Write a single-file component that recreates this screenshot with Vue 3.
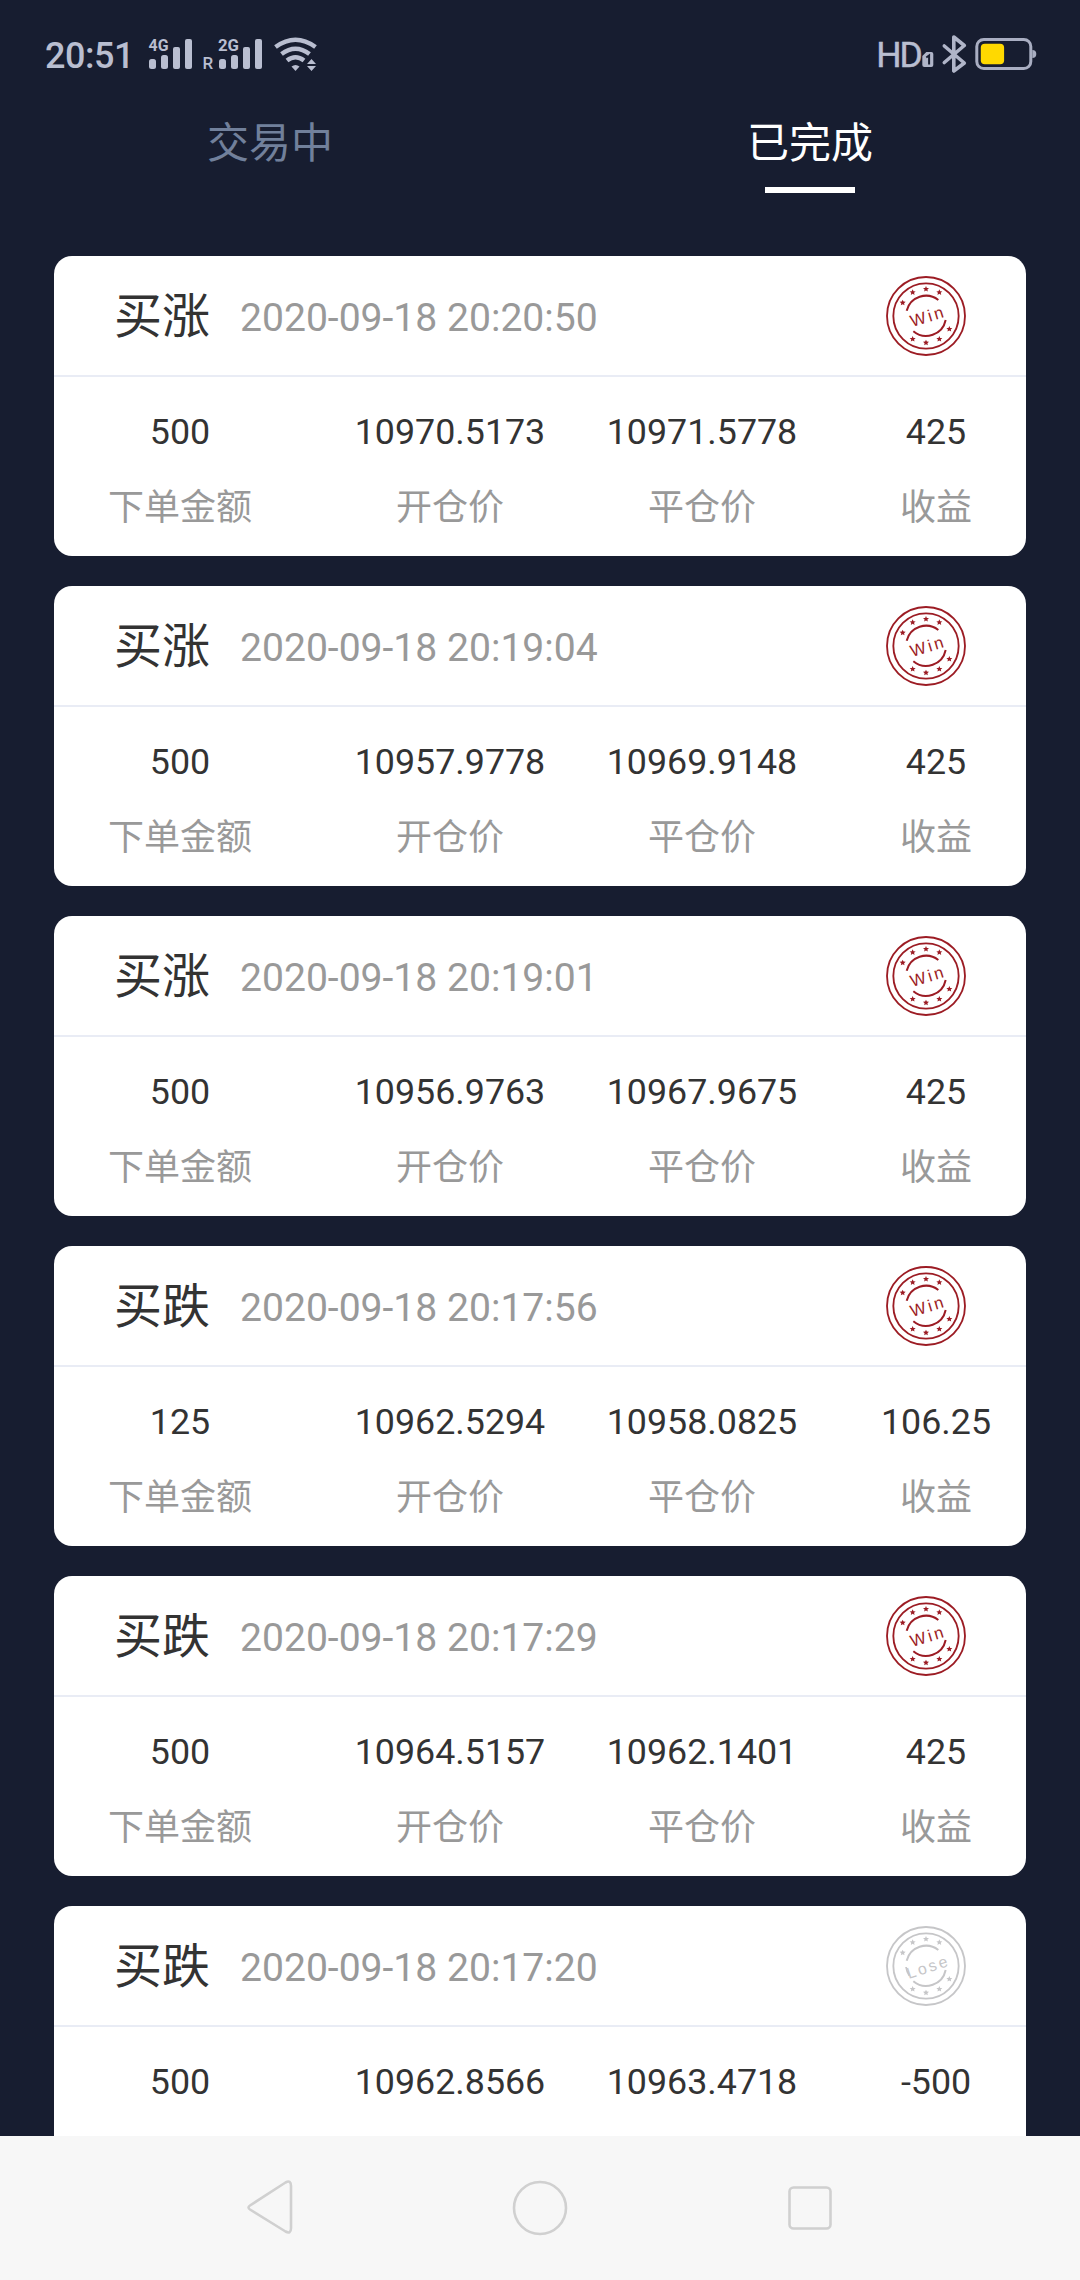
<script setup>
const orders = [
  { side: '买涨', time: '2020-09-18 20:20:50', amount: '500', open: '10970.5173', close: '10971.5778', profit: '425', win: true },
  { side: '买涨', time: '2020-09-18 20:19:04', amount: '500', open: '10957.9778', close: '10969.9148', profit: '425', win: true },
  { side: '买涨', time: '2020-09-18 20:19:01', amount: '500', open: '10956.9763', close: '10967.9675', profit: '425', win: true },
  { side: '买跌', time: '2020-09-18 20:17:56', amount: '125', open: '10962.5294', close: '10958.0825', profit: '106.25', win: true },
  { side: '买跌', time: '2020-09-18 20:17:29', amount: '500', open: '10964.5157', close: '10962.1401', profit: '425', win: true },
  { side: '买跌', time: '2020-09-18 20:17:20', amount: '500', open: '10962.8566', close: '10963.4718', profit: '-500', win: false },
]

const columns = [
  { key: 'amount', label: '下单金额' },
  { key: 'open', label: '开仓价' },
  { key: 'close', label: '平仓价' },
  { key: 'profit', label: '收益' },
]

// The last card runs under the navigation bar, above its label row.
const fullCards = orders.length - 1

const stars = [
  [-70, -40], [-40, -71], [0, -81], [40, -71],
  [-40, 69], [0, 80], [40, 69], [70, 39],
]
</script>

<template>
  <div class="screen">
    <header class="status">
      <span class="clock">20:51</span>
      <svg class="signals" width="186" height="44" viewBox="0 -6 186 44">
        <g fill="#b9bed0">
          <rect x="7" y="21" width="7" height="10" rx="2.5" />
          <rect x="19" y="17" width="7" height="14" rx="2.5" />
          <rect x="31" y="9" width="7" height="22" rx="2" />
          <rect x="43" y="1" width="7" height="30" rx="2" />
          <rect x="77" y="21" width="7" height="10" rx="2.5" />
          <rect x="89" y="17" width="7" height="14" rx="2.5" />
          <rect x="101" y="9" width="7" height="22" rx="2" />
          <rect x="113" y="1" width="7" height="30" rx="2" />
          <text x="6.500" y="13" class="net" textLength="20" lengthAdjust="spacingAndGlyphs">4G</text>
          <text x="76" y="13" class="net" textLength="21" lengthAdjust="spacingAndGlyphs">2G</text>
          <text x="60.500" y="31" class="roam">R</text>
          <path d="M149.500 28.500 Q153.500 25.500 157.500 28.500 L153.500 33 Z" />
          <path d="M165 26 l4.500 -5 l4.500 5z M165 28 l4.500 5 l4.500 -5z" />
        </g>
        <g fill="none" stroke="#b9bed0" stroke-width="4.500">
          <path d="M133.500 9 Q153.500 -5.500 173.500 9" />
          <path d="M139.500 16 Q153.500 5.500 167.500 16" />
          <path d="M145 22.500 Q153.500 16 162 22.500" />
        </g>
      </svg>
      <span class="hd">HD</span>
      <svg width="118" height="46" viewBox="0.700 -2 118 46">
        <path d="M6 19 H11 Q13 19 13 21 V32 Q13 34 11 34 H4 Q2 34 2 32 V23z" fill="#b0b5c8" />
        <path d="M6 24.500 L8.800 22.500 V31.500" fill="none" stroke="#171d30" stroke-width="2" />
        <path d="M24 13 L44 30 L33.500 38 V4 L44 12.500 L24 29.500" fill="none" stroke="#b0b5c8" stroke-width="3.600" stroke-linejoin="round" stroke-linecap="round" />
        <rect x="56.500" y="6.500" width="54" height="29" rx="7" fill="none" stroke="#a9aec2" stroke-width="3" />
        <path d="M112 17 a4 4 0 0 1 0 8z" fill="#a9aec2" />
        <rect x="60.500" y="10.700" width="23.300" height="20.600" rx="4" fill="#ffd900" />
      </svg>
    </header>

    <nav class="tabs">
      <div class="tab">交易中</div>
      <div class="tab active">已完成</div>
    </nav>

    <main class="list">
      <section v-for="(order, n) in orders" :key="order.time" class="card">
        <div class="head">
          <span class="side">{{ order.side }}</span>
          <span class="time">{{ order.time }}</span>
          <svg class="stamp" :class="order.win ? 'win' : 'lose'" width="82" height="82" viewBox="-123 -123 246 246">
            <g fill="none" stroke="currentColor">
              <circle r="117" stroke-width="5.500" />
              <circle r="98" stroke-width="5.500" />
              <path d="M-58 -16 A60 60 0 0 1 37 -48" stroke-width="6" />
              <path d="M-38 46 A60 60 0 0 0 59 12" stroke-width="6" />
              <path v-if="!order.win" d="M-60 3 Q-58 18 -50 29" stroke-width="5" />
            </g>
            <polygon
              v-for="([x, y], i) in stars"
              :key="i"
              :transform="`translate(${x} ${y})`"
              points="0,-9 2.600,-3.200 9,-2.700 4.200,1.500 5.600,7.800 0,4.400 -5.600,7.800 -4.200,1.500 -9,-2.700 -2.600,-3.200"
              fill="currentColor"
            />
            <text
              v-if="order.win"
              transform="translate(-41 33) rotate(-17)"
              font-size="50"
              textLength="101"
              fill="currentColor"
            >Win</text>
            <text v-else transform="translate(-52 39) rotate(-18)" font-size="48" textLength="126" fill="currentColor">Lose</text>
          </svg>
        </div>
        <div class="figures">
          <div v-for="col in columns" :key="col.key" class="figure" :class="col.key">
            <span class="value">{{ order[col.key] }}</span>
            <span v-if="n < fullCards" class="label">{{ col.label }}</span>
          </div>
        </div>
      </section>
    </main>

    <footer class="navbar">
      <svg width="60" height="60" viewBox="0 0 60 60">
        <path d="M10 27.500 L45.500 4.500 Q51 1.500 51 8 V50 Q51 56.500 45.500 53.500 L10 31.500 Q7 29.500 10 27.500Z" />
      </svg>
      <svg width="60" height="60" viewBox="0 0 60 60"><circle cx="30" cy="30" r="26" /></svg>
      <svg width="60" height="60" viewBox="0 0 60 60"><rect x="9.500" y="9.500" width="41" height="41" rx="4" /></svg>
    </footer>
  </div>
</template>

<style>
body {
  margin: 0;
  background: #171d30;
}
</style>

<style scoped>
.screen {
  display: flex;
  flex-direction: column;
  width: 1080px;
  height: 2280px;
  overflow: hidden;
  background: #171d30;
  font-family: Roboto, "Noto Sans CJK SC", sans-serif;
}
.status {
  display: flex;
  align-items: center;
  box-sizing: border-box;
  height: 108px;
  padding: 0 41px 0 45px;
  flex: none;
  color: #b9bed0;
}
.clock {
  width: 97px;
  padding-top: 4px;
  font-size: 36px;
  font-weight: 500;
  line-height: 42px;
  letter-spacing: -0.5px;
}
.net {
  font-size: 16.5px;
  font-weight: 700;
}
.roam {
  font-size: 17px;
  font-weight: 500;
}
.hd {
  margin-left: auto;
  padding-top: 2px;
  font-size: 35.5px;
  line-height: 42px;
  letter-spacing: -1.9px;
  -webkit-text-stroke: 0.5px #b9bed0;
}
.tabs {
  display: flex;
  height: 85px;
  flex: none;
}
.tab {
  position: relative;
  flex: 1;
  text-align: center;
  font-size: 42px;
  line-height: 71px;
  color: #71809b;
}
.tab.active {
  color: #fff;
}
.tab.active::after {
  content: "";
  position: absolute;
  left: 50%;
  bottom: 0;
  width: 90px;
  height: 6px;
  margin-left: -45px;
  background: #fff;
}
.list {
  display: flex;
  flex-direction: column;
  flex: 1;
  gap: 30px;
  min-height: 0;
  overflow: hidden;
  padding: 63px 54px 0;
}
.card {
  height: 300px;
  flex: none;
  border-radius: 18px;
  background: #fff;
}
.head {
  display: flex;
  align-items: center;
  box-sizing: border-box;
  height: 121px;
  padding: 0 59px 0 60px;
  border-bottom: 2px solid #e9ecf5;
}
.side {
  width: 126px;
  padding-top: 3px;
  font-size: 48px;
  line-height: 60px;
  color: #333;
}
.time {
  padding-top: 4px;
  font-size: 39.1px;
  color: #999;
}
.stamp {
  margin-left: auto;
  font-family: "Liberation Sans", sans-serif;
}
.win {
  color: #9c1c24;
}
.lose {
  color: #c6c6c8;
}
.figures {
  display: flex;
  padding-top: 30px;
}
.figure {
  display: flex;
  flex-direction: column;
  align-items: center;
  width: 216px;
}
.figure.amount {
  width: 252px;
}
.figure.open {
  width: 288px;
}
.figure.profit {
  width: 180px;
  margin-left: 36px;
}
.value {
  font-size: 35.8px;
  line-height: 50px;
  color: #333;
}
.label {
  margin-top: 26px;
  font-size: 36px;
  line-height: 50px;
  color: #999;
}
.navbar {
  display: flex;
  align-items: center;
  justify-content: center;
  gap: 210px;
  height: 144px;
  flex: none;
  background: #f7f7f7;
}
.navbar svg {
  fill: none;
  stroke: #d0d0d0;
  stroke-width: 2.6;
}
</style>
